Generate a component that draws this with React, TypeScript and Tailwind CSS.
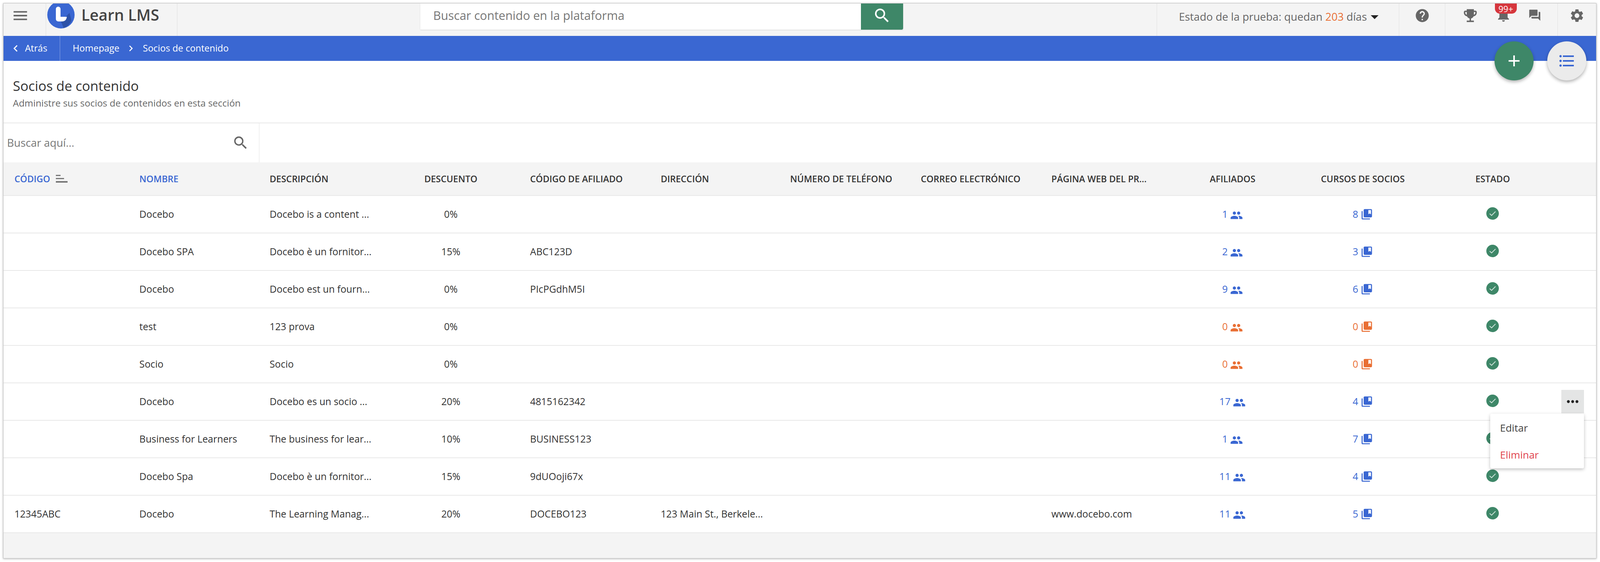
import {
  MdAdd,
  MdArrowDropDown,
  MdChevronLeft,
  MdChevronRight,
  MdCollectionsBookmark,
  MdEmojiEvents,
  MdForum,
  MdFormatListBulleted,
  MdHelp,
  MdMenu,
  MdMoreHoriz,
  MdNotifications,
  MdPeople,
  MdSearch,
  MdSettings,
} from "react-icons/md";

interface Partner {
  code: string;
  name: string;
  description: string;
  discount: string;
  affiliateCode: string;
  address: string;
  website: string;
  affiliates: number;
  courses: number;
}

const PARTNERS: Partner[] = [
  { code: "", name: "Docebo", description: "Docebo is a content ...", discount: "0%", affiliateCode: "", address: "", website: "", affiliates: 1, courses: 8 },
  { code: "", name: "Docebo SPA", description: "Docebo è un fornitor...", discount: "15%", affiliateCode: "ABC123D", address: "", website: "", affiliates: 2, courses: 3 },
  { code: "", name: "Docebo", description: "Docebo est un fourn...", discount: "0%", affiliateCode: "PIcPGdhM5I", address: "", website: "", affiliates: 9, courses: 6 },
  { code: "", name: "test", description: "123 prova", discount: "0%", affiliateCode: "", address: "", website: "", affiliates: 0, courses: 0 },
  { code: "", name: "Socio", description: "Socio", discount: "0%", affiliateCode: "", address: "", website: "", affiliates: 0, courses: 0 },
  { code: "", name: "Docebo", description: "Docebo es un socio ...", discount: "20%", affiliateCode: "4815162342", address: "", website: "", affiliates: 17, courses: 4 },
  { code: "", name: "Business for Learners", description: "The business for lear...", discount: "10%", affiliateCode: "BUSINESS123", address: "", website: "", affiliates: 1, courses: 7 },
  { code: "", name: "Docebo Spa", description: "Docebo è un fornitor...", discount: "15%", affiliateCode: "9dUOoji67x", address: "", website: "", affiliates: 11, courses: 4 },
  { code: "12345ABC", name: "Docebo", description: "The Learning Manag...", discount: "20%", affiliateCode: "DOCEBO123", address: "123 Main St., Berkele...", website: "www.docebo.com", affiliates: 11, courses: 5 },
];

const COLS =
  "grid grid-cols-[331fr_345fr_328fr_362fr_346fr_343fr_346fr_346fr_337fr_344fr_346fr_342fr_103fr] items-center";

function Logo() {
  return (
    <svg width="70" height="70" viewBox="0 0 70 70" className="shrink-0">
      <circle cx="35" cy="35" r="35" fill="#3a67d2" />
      <path d="M35 52 L57 30 L62 50 A35 35 0 0 1 42 69 Z" fill="#2d52a8" />
      <path
        d="M22 20 a6 6 0 0 1 12 0 v20 h16 q-1 12 -13 12 h-8 q-7 0 -7 -7 Z"
        fill="#ffffff"
      />
    </svg>
  );
}

function SortIcon() {
  return (
    <svg width="32" height="24" viewBox="0 0 32 24" className="shrink-0">
      <rect x="1" y="2" width="12" height="3" fill="#777777" />
      <rect x="1" y="10" width="21" height="3" fill="#777777" />
      <rect x="1" y="18" width="30" height="4" fill="#777777" />
    </svg>
  );
}

function StatusIcon() {
  return (
    <svg width="32" height="32" viewBox="0 0 32 32">
      <circle cx="16" cy="16" r="16" fill="#3e8768" />
      <path d="M8.5 16.5 L13.5 21 L23.5 11" fill="none" stroke="#cfe3da" strokeWidth="2" />
    </svg>
  );
}

function HeadCell({ children, center, blue }: { children: React.ReactNode; center?: boolean; blue?: boolean }) {
  return (
    <div
      className={`flex items-center gap-[14px] whitespace-nowrap text-[23px] font-semibold ${
        center ? "justify-center" : "pl-[28px]"
      } ${blue ? "text-[#3a67d2]" : "text-[#333333]"}`}
    >
      {children}
    </div>
  );
}

function Counter({ value, icon }: { value: number; icon: "people" | "courses" }) {
  const color = value === 0 ? "text-[#e96f34]" : "text-[#3a67d2]";
  return (
    <div className={`flex items-center justify-center gap-[6px] text-[25px] ${color}`}>
      <span>{value}</span>
      {icon === "people" ? (
        <MdPeople className="mt-[4px] size-[33px]" />
      ) : (
        <MdCollectionsBookmark className="size-[32px]" />
      )}
    </div>
  );
}

function Row({ partner, menuOpen }: { partner: Partner; menuOpen: boolean }) {
  return (
    <div className={`${COLS} h-[96px] border-b-2 border-[#e8e8e8] text-[24.8px] text-[#333333]`}>
      <div className="pl-[28px]">{partner.code}</div>
      <div className="pl-[28px] whitespace-nowrap">{partner.name}</div>
      <div className="pl-[28px] whitespace-nowrap">{partner.description}</div>
      <div className="text-center">{partner.discount}</div>
      <div className="pl-[28px]">{partner.affiliateCode}</div>
      <div className="pl-[28px] whitespace-nowrap">{partner.address}</div>
      <div />
      <div />
      <div className="pl-[28px]">{partner.website}</div>
      <Counter value={partner.affiliates} icon="people" />
      <Counter value={partner.courses} icon="courses" />
      <div className="flex justify-center pb-[4px]">
        <StatusIcon />
      </div>
      <div className="relative flex h-full items-center justify-end pr-[31px]">
        {menuOpen && (
          <>
            <button className="flex h-[60px] w-[58px] items-center justify-center bg-[#e4e5e5] text-[#222222]">
              <MdMoreHoriz className="size-[44px]" />
            </button>
            <div className="absolute right-[31px] top-[78px] z-10 flex h-[140px] w-[240px] flex-col rounded-[4px] bg-white pl-[25px] shadow-[0_3px_8px_rgba(0,0,0,0.25)]">
              <div className="flex h-[70px] items-center pt-[2px] text-[26px] text-[#444444]">Editar</div>
              <div className="flex h-[70px] items-center text-[26px] text-[#e0434d]">Eliminar</div>
            </div>
          </>
        )}
      </div>
    </div>
  );
}

export default function App() {
  return (
    <div className="h-[1440px] w-full overflow-hidden bg-white pl-[8px] pr-[9px] pt-[8px] text-[#333333] [font-family:'Open_Sans',sans-serif]">
      <div className="relative flex h-[1423px] flex-col overflow-hidden border border-[#c4c4c4] bg-white shadow-[0_1px_5px_rgba(0,0,0,0.3)]">
        {/* Top bar */}
        <div className="grid h-[83px] shrink-0 grid-cols-[112fr_348fr_644fr_1279fr_671fr_642fr_122fr_298fr_102fr] bg-[#f4f4f4]">
          <div className="flex pl-[20px] pt-[8px] text-[#666666]">
            <MdMenu className="size-[46px]" />
          </div>
          <div className="relative flex border-x border-[#dedede]">
            <div className="absolute left-[3px] top-[-6px]">
              <Logo />
            </div>
            <div className="ml-[90px] pt-[5px] text-[39.5px] leading-[48px] font-semibold whitespace-nowrap text-[#444444]">Learn LMS</div>
          </div>
          <div />
          <div className="flex h-[67px] shadow-[0_1px_2px_rgba(0,0,0,0.15)]">
            <input
              className="min-w-0 flex-1 bg-white pb-[6px] pl-[33px] text-[30.5px] outline-none placeholder:text-[#777777]"
              placeholder="Buscar contenido en la plataforma"
            />
            <button className="flex w-[108px] items-center justify-center rounded-br-[4px] bg-[#3e8768] pb-[6px] text-white">
              <MdSearch className="size-[48px]" />
            </button>
          </div>
          <div />
          <div className="flex items-start border-l border-[#e2e2e2] pl-[56px] pt-[13px] text-[27.5px] text-[#666666]">
            <span className="whitespace-nowrap">
              Estado de la prueba: quedan <span className="text-[#e96f34]">203</span> días
            </span>
            <MdArrowDropDown className="-ml-[4px] mt-[-3px] size-[48px] text-[#222222]" />
          </div>
          <div className="flex justify-center border-l border-[#e2e2e2] pt-[11px] text-[#666666]">
            <MdHelp className="size-[40px]" />
          </div>
          <div className="flex items-start justify-evenly border-l border-[#e2e2e2] text-[#666666]">
            <MdEmojiEvents className="mt-[9px] size-[44px]" />
            <div className="relative">
              <MdNotifications className="mt-[8px] size-[42px]" />
              <div className="absolute left-[-1px] top-0 flex h-[26px] w-[56px] items-center justify-center rounded-b-[13px] bg-[#d6363d] text-[22px] leading-none text-white">
                99+
              </div>
            </div>
            <MdForum className="mt-[13px] size-[34px]" />
          </div>
          <div className="flex justify-center border-l border-[#e2e2e2] pt-[11px] text-[#666666]">
            <MdSettings className="size-[40px]" />
          </div>
        </div>

        {/* Breadcrumb bar */}
        <div className="flex h-[64px] shrink-0 items-center bg-[#3a67d2] text-[23.5px] text-white">
          <div className="flex h-full w-[145px] items-center border-r border-[#8aa5e4] pl-[14px]">
            <MdChevronLeft className="size-[34px]" />
            <span className="ml-[7px]">Atrás</span>
          </div>
          <span className="ml-[32px]">Homepage</span>
          <MdChevronRight className="ml-[14px] size-[30px]" />
          <span className="ml-[16px]">Socios de contenido</span>
        </div>

        {/* Floating actions */}
        <div className="absolute right-[25px] top-[97px] z-10 flex gap-[35px]">
          <button className="flex size-[100px] items-center justify-center rounded-full bg-[#3e8768] text-white shadow-[0_4px_8px_rgba(0,0,0,0.3)]">
            <MdAdd className="size-[48px]" />
          </button>
          <button className="flex size-[100px] items-center justify-center rounded-full bg-[#ebebeb] text-[#3a67d2] shadow-[0_4px_8px_rgba(0,0,0,0.3)]">
            <MdFormatListBulleted className="size-[48px]" />
          </button>
        </div>

        {/* Page title */}
        <div className="flex h-[160px] shrink-0 flex-col border-b-2 border-[#e8e8e8] pl-[24px] pt-[40px]">
          <h1 className="text-[34.5px] leading-[48px] font-medium text-[#333333]">Socios de contenido</h1>
          <p className="mt-[4px] text-[24px] leading-[32px] text-[#666666]">Administre sus socios de contenidos en esta sección</p>
        </div>

        {/* Table search */}
        <div className="flex h-[100px] shrink-0">
          <div className="flex w-[16.07%] items-center border-r border-[#e2e2e2] pl-[9px] pr-[25px]">
            <input
              className="min-w-0 flex-1 bg-transparent text-[27.5px] outline-none placeholder:text-[#777777]"
              placeholder="Buscar aquí..."
            />
            <MdSearch className="size-[44px] text-[#666666]" />
          </div>
        </div>

        {/* Table header */}
        <div className={`${COLS} h-[86px] shrink-0 border-b-2 border-[#e8e8e8] bg-[#f4f4f4]`}>
          <HeadCell blue>
            CÓDIGO
            <SortIcon />
          </HeadCell>
          <HeadCell blue>NOMBRE</HeadCell>
          <HeadCell>DESCRIPCIÓN</HeadCell>
          <HeadCell center>DESCUENTO</HeadCell>
          <HeadCell>CÓDIGO DE AFILIADO</HeadCell>
          <HeadCell>DIRECCIÓN</HeadCell>
          <HeadCell>NÚMERO DE TELÉFONO</HeadCell>
          <HeadCell>CORREO ELECTRÓNICO</HeadCell>
          <HeadCell>PÁGINA WEB DEL PR...</HeadCell>
          <HeadCell center>AFILIADOS</HeadCell>
          <HeadCell center>CURSOS DE SOCIOS</HeadCell>
          <HeadCell center>ESTADO</HeadCell>
          <div />
        </div>

        {/* Rows */}
        <div className="shrink-0">
          {PARTNERS.map((partner, i) => (
            <Row key={i} partner={partner} menuOpen={i === 5} />
          ))}
        </div>
        <div className="flex-1 bg-[#f4f4f4]" />
      </div>
    </div>
  );
}
